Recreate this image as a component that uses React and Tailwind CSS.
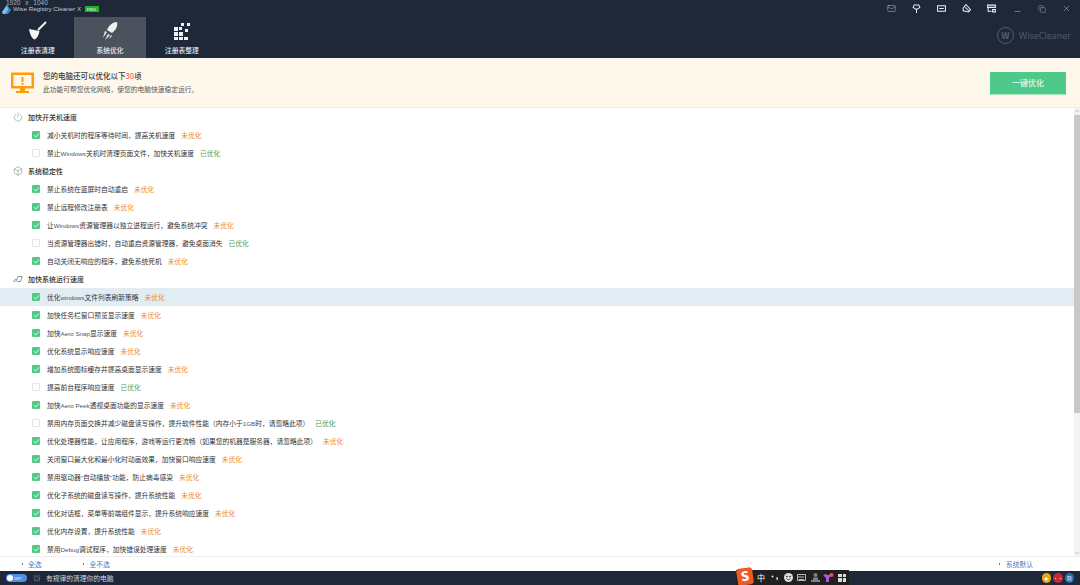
import { Check, Power, Box, Mail, Minus, X, Copy, AlarmClock, ChevronUp, ChevronDown } from "lucide-react"

const font = { fontFamily: '"Noto Sans CJK SC", "Liberation Sans", sans-serif' }
const latin = { fontFamily: '"Liberation Sans", sans-serif' }

const sections = [
    {
        title: '加快开关机速度',
        icon: 'power',
        rows: [
            ['减小关机时的程序等待时间，提高关机速度', 0],
            ['禁止Windows关机时清理页面文件，加快关机速度', 1],
        ],
    },
    {
        title: '系统稳定性',
        icon: 'box',
        rows: [
            ['禁止系统在蓝屏时自动重启', 0],
            ['禁止远程修改注册表', 0],
            ['让Windows资源管理器以独立进程运行，避免系统冲突', 0],
            ['当资源管理器出错时，自动重启资源管理器，避免桌面消失', 1],
            ['自动关闭无响应的程序，避免系统死机', 0],
        ],
    },
    {
        title: '加快系统运行速度',
        icon: 'speed',
        rows: [
            ['优化windows文件列表刷新策略', 0, true],
            ['加快任务栏窗口预览显示速度', 0],
            ['加快Aero Snap显示速度', 0],
            ['优化系统显示响应速度', 0],
            ['增加系统图标缓存并提高桌面显示速度', 0],
            ['提高前台程序响应速度', 1],
            ['加快Aero Peek透视桌面功能的显示速度', 0],
            ['禁用内存页面交换并减少磁盘读写操作，提升软件性能（内存小于1GB时，请忽略此项）', 1],
            ['优化处理器性能，让应用程序，游戏等运行更流畅（如果您的机器是服务器，请忽略此项）', 0],
            ['关闭窗口最大化和最小化时动画效果，加快窗口响应速度', 0],
            ['禁用驱动器"自动播放"功能，防止病毒感染', 0],
            ['优化子系统的磁盘读写操作，提升系统性能', 0],
            ['优化对话框，菜单等前端组件显示，提升系统响应速度', 0],
            ['优化内存设置，提升系统性能', 0],
            ['禁用Debug调试程序，加快错误处理速度', 0],
        ],
    },
]

const SectionIcon = ({ type }) => {
    if (type === 'power') return <Power size={10} strokeWidth={1} className="text-[#56606e]" />
    if (type === 'box') return <Box size={10} strokeWidth={1} className="text-[#56606e]" />
    return (
        <svg width="12" height="8" viewBox="0 0 12 8" fill="none" stroke="#56606e" strokeWidth="0.8">
            <path d="M0 6.5h3M2 4.5h2M6 1L3.5 7M6 1h5L9 7H5" />
        </svg>
    )
}

// latin words are narrower and lighter than the chinese around them
const RowText = ({ text }) => (
    <span className="ml-[7px] text-[6.75px] text-[#333] whitespace-pre">
        {text.split(/([A-Za-z0-9" ]+)/).map((part, i) =>
            i % 2 === 1
                ? <span key={i} style={latin} className="text-[6.25px] text-[#4a5568]">{part}</span>
                : part
        )}
    </span>
)

const Row = ({ text, done, active }) => (
    <div className={`flex items-center h-[18px] pl-[32px] ${active ? 'bg-[#e2edf3]' : ''}`}>
        {done ? (
            <span className="w-[8px] h-[8px] rounded-[1px] border border-[#e2e4e6] bg-white"></span>
        ) : (
            <span className="flex items-center justify-center w-[8px] h-[8px] rounded-[1px] bg-[#4fcb87]">
                <Check size={7} strokeWidth={3} className="text-white" />
            </span>
        )}
        <RowText text={text} />
        <span className={`ml-[6px] text-[6.75px] whitespace-nowrap ${done ? 'text-[#4f9a52]' : 'text-[#ef8a1e]'}`}>
            {done ? '已优化' : '未优化'}
        </span>
    </div>
)

const NavTab = ({ label, active, children }) => (
    <div className={`flex flex-col items-center w-[72px] h-[41px] ${active ? 'bg-[#4b525e]' : ''}`}>
        <div className="h-[25px] flex items-center justify-center mt-[1px]">{children}</div>
        <span className="text-[6.75px] leading-[8px] font-medium text-[#e8eaed] mt-[3px]">{label}</span>
    </div>
)

const ImeCell = ({ children }) => (
    <span className="flex items-center justify-center w-[13.5px] h-[14px]">{children}</span>
)

export default function App() {
    return (
        <div style={font} className="flex flex-col w-[1080px] h-[585px] overflow-hidden bg-white">

            {/* title bar + tabs */}
            <div className="h-[58px] bg-[#1f2839] flex flex-col shrink-0">
                <div className="relative flex items-center h-[17px] pl-[2px]">
                    <span style={latin} className="absolute left-[6px] top-0 text-[6.5px] leading-[5px] [word-spacing:3px] text-[#aab0b9]">1920 x 1040</span>
                    <svg width="10" height="9" viewBox="0 0 10 9" className="mt-[1px]">
                        <path d="M5 0L9 5 6 9 1 9 0 7z" fill="#3b88c9" />
                        <path d="M5 0L6 5 3 9 1 9 0 7z" fill="#7cc0ee" />
                    </svg>
                    <span style={latin} className="ml-[1px] mt-[1px] text-[6.25px] text-[#c3c7cd]">Wise Registry Cleaner X</span>
                    <span className="ml-[3.5px] mt-[1px] w-[14px] h-[6px] bg-[#22b02c] text-white text-[4px] leading-[6px] text-center">FREE</span>
                    <div className="ml-auto flex items-center gap-[16.2px] pr-[9px] text-[#eceef0]">
                        <Mail size={9} strokeWidth={1} />
                        <svg width="9" height="9" viewBox="0 0 8 8" fill="none" stroke="currentColor" strokeWidth="0.9"><path d="M4 8V4M2 .8h4L7 3 5 4.500H3L1 3z" /></svg>
                        <svg width="9" height="9" viewBox="0 0 8 8" fill="none" stroke="currentColor" strokeWidth="0.9"><path d="M.5 1.500h7v5h-7zM2 4h4" /></svg>
                        <svg width="9" height="9" viewBox="0 0 8 8" fill="none" stroke="currentColor" strokeWidth="0.9"><path d="M3.500.5L5 2 7.500 5 6 7 1 6 1 4zM3 3l3 3" /></svg>
                        <svg width="9" height="9" viewBox="0 0 8 8" fill="none" stroke="currentColor" strokeWidth="0.9"><path d="M.5 1h7v2h-7zM1 3v3.500h3M5 5h3v2H5z" /></svg>
                        <Minus size={9} strokeWidth={1} className="mt-[5px]" />
                        <Copy size={8} strokeWidth={1} />
                        <X size={9} strokeWidth={1} />
                    </div>
                </div>
                <div className="flex items-start flex-1 justify-between pr-[9px]">
                    <div className="flex pl-[2px]">
                        <NavTab label="注册表清理">
                            <svg width="20" height="20" viewBox="0 0 20 20" fill="#f5f5f5">
                                <path d="M18 1L10 9" stroke="#f5f5f5" strokeWidth="2" />
                                <path d="M1 8L11.500 10C11 14 9 17 7 18.500C4 18 2 14 1 8z" />
                            </svg>
                        </NavTab>
                        <NavTab label="系统优化" active>
                            <svg width="20" height="20" viewBox="0 0 20 20" fill="#f0f0f0">
                                <path d="M17 1c1 4-1 8-5 11l-5-3c2-5 6-8 10-8zM5 10l2 1-4 6zM8 13l2 1-5 5zM11 14l1 1-3 3z" />
                            </svg>
                        </NavTab>
                        <NavTab label="注册表整理">
                            <svg width="20" height="20" viewBox="0 0 20 20" fill="#f0f0f0">
                                <path d="M2 6h4v4H2zM2 11h4v4H2zM2 16h4v3H2zM7 11h4v4H7zM7 16h4v3H7zM12 16h4v3h-4zM7 6h3v3H7zM13 8h3v3h-3zM9 2h3v3H9zM15 2h3v3h-3z" />
                            </svg>
                        </NavTab>
                    </div>
                    <div className="flex items-center mt-[10px] text-[#565d69]">
                        <span className="flex items-center justify-center w-[17px] h-[17px] rounded-full border border-[#565d69] text-[9px] font-bold">W</span>
                        <span style={{ fontFamily: '"Open Sans", sans-serif' }} className="ml-[5px] mt-[1px] text-[9px]">WiseCleaner</span>
                    </div>
                </div>
            </div>

            {/* banner */}
            <div className="h-[50px] bg-[#fef8ec] border-b border-[#f5efdc] flex items-center pl-[11px] pr-[14px] shrink-0">
                <svg width="24" height="24" viewBox="0 0 24 24">
                    <path d="M0 1.500h23v16H14v2.500h4v2H5v-2h4v-2.500H0z" fill="#ff9c0d" />
                    <path d="M2.500 4h18v11h-18z" fill="#fef8ec" />
                    <path d="M10.500 6h2v5h-2zM10.500 12h2v2h-2z" fill="#ff9c0d" />
                </svg>
                <div className="ml-[8px]">
                    <div className="text-[7.5px] leading-[11px] font-medium text-[#3a3a3a]">您的电脑还可以优化以下<span className="text-[#f36a5a]">30</span>项</div>
                    <div className="text-[6.75px] leading-[11px] mt-[3px] text-[#555]">此功能可帮您优化网络，使您的电脑快速稳定运行。</div>
                </div>
                <button className="ml-auto mt-[1px] w-[76px] h-[23px] bg-[#4ec98a] border-b border-[#a9e4c3] text-white text-[8px]">一键优化</button>
            </div>

            {/* list */}
            <div className="flex flex-1 min-h-0">
                <div className="flex-1 overflow-hidden">
                    {sections.map((s) => (
                        <div key={s.title}>
                            <div className="flex items-center h-[18px] pl-[13px]">
                                <span className="flex items-center justify-center w-[10px]"><SectionIcon type={s.icon} /></span>
                                <span className="ml-[5px] text-[7px] font-medium text-[#333]">{s.title}</span>
                            </div>
                            {s.rows.map((r) => (
                                <Row key={r[0]} text={r[0]} done={r[1]} active={r[2]} />
                            ))}
                        </div>
                    ))}
                </div>
                <div className="w-[6px] flex flex-col items-center bg-[#f3f3f3]">
                    <ChevronUp size={6} className="text-[#888] h-[6px] shrink-0" />
                    <div className="w-full h-[298px] bg-[#c9c9c9] mt-[1px]"></div>
                    <ChevronDown size={6} className="text-[#888] h-[6px] shrink-0 mt-auto" />
                </div>
            </div>

            {/* footer */}
            <div className="h-[15px] border-t border-[#f0f0f0] flex items-center text-[6.75px] text-[#5478b5] shrink-0">
                <span className="ml-[21.500px] w-[1.500px] h-[1.500px] bg-[#5478b5]"></span>
                <span className="ml-[5px]">全选</span>
                <span className="ml-[41px] w-[1.500px] h-[1.500px] bg-[#5478b5]"></span>
                <span className="ml-[5.500px]">全不选</span>
                <span className="ml-auto w-[1.500px] h-[1.500px] bg-[#5478b5]"></span>
                <span className="ml-[5.500px] mr-[47px]">系统默认</span>
            </div>

            {/* status bar */}
            <div className="relative h-[14px] bg-[#1f2839] flex items-center pl-[5.500px] shrink-0">
                <span className="flex items-center w-[21px] h-[8px] rounded-full bg-[#4e8fe6] pl-[1px]">
                    <span className="w-[6px] h-[6px] rounded-full bg-white"></span>
                    <span className="ml-[1.500px] text-[4px] leading-[5px] text-white">OFF</span>
                </span>
                <AlarmClock size={8} strokeWidth={1} className="ml-[6px] text-[#c7cbd1]" />
                <span className="ml-[5.500px] text-[6.75px] text-[#d3d6db]">有规律的清理你的电脑</span>

                {/* input method toolbar */}
                <div className="absolute left-[736px] bottom-0 w-[113px] h-[15px] pl-[18.250px] bg-[#202020] flex items-center text-white">
                    <span className="absolute left-[1px] -top-[2px] w-[16px] h-[17px] rounded-[3px] bg-[#f05a22] text-white text-[13px] leading-[16px] font-black text-center rotate-[-8deg]">S</span>
                    <ImeCell><span className="text-[8px] leading-[8px]">中</span></ImeCell>
                    <ImeCell>
                        <svg width="8" height="6" viewBox="0 0 8 6" fill="#e5e5e5"><circle cx="1.500" cy="1.500" r="1" /><path d="M5 2.500h2v1.500l-1 1.500z" /></svg>
                    </ImeCell>
                    <ImeCell>
                        <svg width="9" height="9" viewBox="0 0 9 9"><circle cx="4.500" cy="4.500" r="4.500" fill="#e0e0e0" /><circle cx="3" cy="3.500" r=".8" fill="#202020" /><circle cx="6" cy="3.500" r=".8" fill="#202020" /><path d="M2.500 5.500c1 1.500 3 1.500 4 0" stroke="#202020" strokeWidth=".8" fill="none" /></svg>
                    </ImeCell>
                    <ImeCell>
                        <svg width="9" height="7" viewBox="0 0 9 7" fill="none" stroke="#e0e0e0" strokeWidth=".8"><path d="M.5.500h8v6h-8zM2 2v2M4 2v2M6 2v2M2 5.500h5" /></svg>
                    </ImeCell>
                    <ImeCell>
                        <svg width="9" height="9" viewBox="0 0 9 9" fill="#808080"><circle cx="4.500" cy="2" r="2" /><path d="M2 4.500h5v2.500H9v2H0V7h2z" /></svg>
                    </ImeCell>
                    <ImeCell>
                        <svg width="11" height="10" viewBox="0 0 11 10"><path d="M0 2l3-1 1 1h2l1-1 1 1-2 3v4H3V5z" fill="#a45ce0" /><circle cx="8.500" cy="2" r="2" fill="#f0503c" /></svg>
                    </ImeCell>
                    <ImeCell>
                        <span className="grid grid-cols-2 gap-[1px]">
                            <span className="w-[3.500px] h-[3.500px] bg-[#ddd]"></span>
                            <span className="w-[3.500px] h-[3.500px] bg-[#ddd]"></span>
                            <span className="w-[3.500px] h-[3.500px] bg-[#ddd]"></span>
                            <span className="w-[3.500px] h-[3.500px] bg-[#ddd]"></span>
                        </span>
                    </ImeCell>
                </div>

                <div className="ml-auto flex items-center gap-[2px] pr-[6px] text-[5px] leading-[9px] text-center text-white">
                    <span className="w-[9.500px] h-[9.500px] rounded-full bg-[#e5a90f]">★</span>
                    <span className="w-[9.500px] h-[9.500px] rounded-full bg-[#c5283a]">•••</span>
                    <span className="w-[9.500px] h-[9.500px] rounded-full bg-[#2c69a5]">简</span>
                </div>
            </div>
        </div>
    )
}
